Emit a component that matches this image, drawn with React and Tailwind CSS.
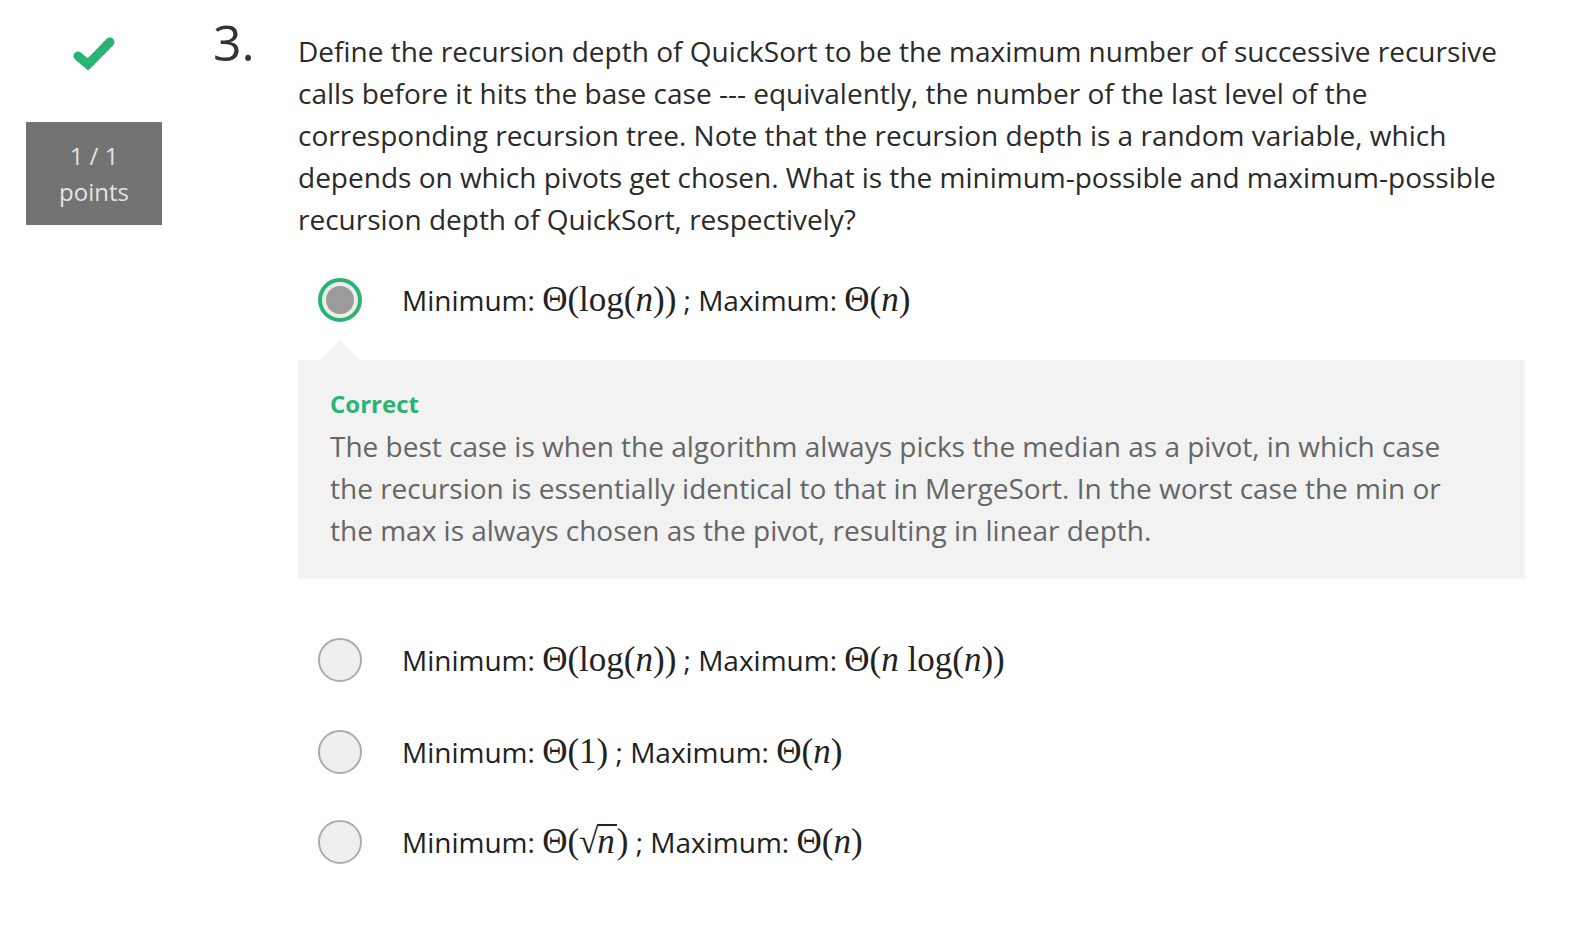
import React from "react";

const serif = { fontFamily: '"Liberation Serif", "Times New Roman", serif' };

const Theta = ({ children }) => (
    <span className="text-[35px]" style={serif}>
        Θ({children})
    </span>
);

const N = () => <i>n</i>;

const options = [
    {
        id: 1,
        selected: true,
        min: <Theta>log(<N />)</Theta>,
        max: <Theta><N /></Theta>,
    },
    {
        id: 2,
        min: <Theta>log(<N />)</Theta>,
        max: <Theta><N /> log(<N />)</Theta>,
    },
    {
        id: 3,
        min: <Theta>1</Theta>,
        max: <Theta><N /></Theta>,
    },
    {
        id: 4,
        min: (
            <Theta>
                <span>√</span>
                <span className="inline-block border-t-[2px] border-[#222] leading-[31px] -ml-[1px] pr-[2px]">
                    <N />
                </span>
            </Theta>
        ),
        max: <Theta><N /></Theta>,
    },
];

const Radio = ({ selected }) =>
    selected ? (
        <div className="w-[44px] h-[44px] rounded-full border-4 border-[#29b473] bg-[#ececec] p-[4px] shrink-0">
            <div className="w-full h-full rounded-full bg-[#9b9b9b]" />
        </div>
    ) : (
        <div className="w-[44px] h-[44px] rounded-full border-2 border-[#acacac] bg-[#efefef] shrink-0" />
    );

const OptionRow = ({ opt, className }) => (
    <div className={`flex items-center h-[44px] pl-[20px] ${className}`}>
        <Radio selected={opt.selected} />
        <div className="ml-[40px] text-[28px] text-[#222] whitespace-nowrap">
            Minimum: {opt.min} ; Maximum: {opt.max}
        </div>
    </div>
);

const App = () => {
    return (
        <div
            className="min-h-screen bg-white text-[#333]"
            style={{ fontFamily: '"Open Sans", "Liberation Sans", sans-serif' }}
        >
            <div className="flex">
                {/* score column */}
                <div className="w-[136px] ml-[26px] flex flex-col items-center shrink-0">
                    <svg className="mt-[36px]" width="44" height="34" viewBox="0 0 44 34">
                        <polyline
                            points="6,20 16,28.5 38,6"
                            fill="none"
                            stroke="#29b473"
                            strokeWidth="9"
                            strokeLinecap="round"
                            strokeLinejoin="miter"
                        />
                    </svg>
                    <div className="mt-[52px] w-[136px] h-[103px] bg-[#737373] text-[#e3e3e3] text-[24px] leading-[36px] flex flex-col items-center justify-center">
                        <span>1 / 1</span>
                        <span>points</span>
                    </div>
                </div>

                {/* question number */}
                <div className="w-[136px] pl-[51px] pt-[12px] text-[50px] leading-[60px] text-[#333] shrink-0">
                    3.
                </div>

                {/* question body */}
                <div className="w-[1227px] pt-[30px]">
                    <p className="text-[28px] leading-[42px] text-[#2a2a2a]">
                        Define the recursion depth of QuickSort to be the maximum number of successive recursive
                        calls before it hits the base case --- equivalently, the number of the last level of the
                        corresponding recursion tree. Note that the recursion depth is a random variable, which
                        depends on which pivots get chosen. What is the minimum-possible and maximum-possible
                        recursion depth of QuickSort, respectively?
                    </p>

                    <OptionRow opt={options[0]} className="mt-[38px]" />

                    <div className="relative mt-[38px] bg-[#f2f2f2] h-[219px] pl-[32px] pt-[29px]">
                        <div className="absolute -top-[20px] left-[22px] w-0 h-0 border-x-[20px] border-x-transparent border-b-[20px] border-b-[#f2f2f2]" />
                        <div className="text-[24px] leading-[30px] font-bold text-[#29b473]">Correct</div>
                        <p className="mt-[6px] text-[28px] leading-[42px] text-[#666] w-[1130px]">
                            The best case is when the algorithm always picks the median as a pivot, in which case
                            the recursion is essentially identical to that in MergeSort. In the worst case the min or
                            the max is always chosen as the pivot, resulting in linear depth.
                        </p>
                    </div>

                    <OptionRow opt={options[1]} className="mt-[59px]" />
                    <OptionRow opt={options[2]} className="mt-[48px]" />
                    <OptionRow opt={options[3]} className="mt-[46px]" />
                </div>
            </div>
        </div>
    );
};

export default App;
